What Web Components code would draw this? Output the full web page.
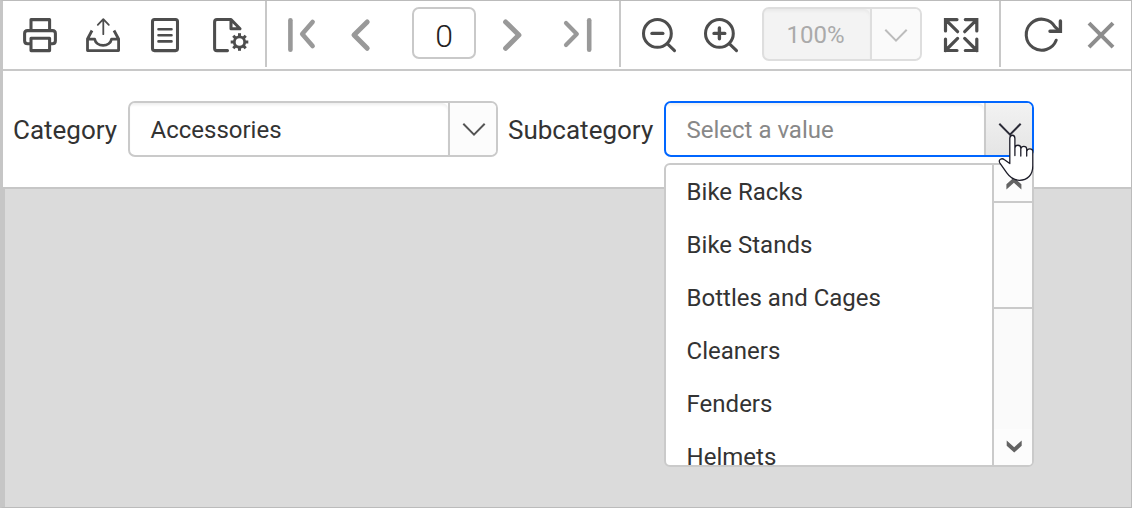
<!DOCTYPE html>
<html lang="en">
<head>
<meta charset="utf-8">
<title>Report Viewer</title>
<style>
html,body{margin:0;height:100%;background:#fff;overflow:hidden}
body{font-family:Roboto,"Liberation Sans",sans-serif;color:#333}
</style>
</head>
<body>
<report-viewer></report-viewer>
<script>
const define = (name, html, setup) => customElements.define(name, class extends HTMLElement {
  constructor() {
    super();
    const t = document.createElement('template');
    t.innerHTML = html;
    this.attachShadow({ mode: 'open' }).appendChild(t.content.cloneNode(true));
  }
  connectedCallback() { if (setup) setup(this, this.shadowRoot); }
});

// Every glyph: [left edge, cell width, markup]; the toolbar row is 68px high.
const teeth = Array.from({ length: 8 }, (_, i) => `<path d="M239.5 36.5V33.2" stroke-width="3" transform="rotate(${i * 45} 239.5 42)"/>`).join('');
const icons = {
  print: [3, 68, '<path d="M31 30V19.6H49.6V30M31 43.8H27.6Q24.6 43.8 24.6 40.8V33.6Q24.6 30.6 27.6 30.6H52.4Q55.4 30.6 55.4 33.6V40.8Q55.4 43.8 52.4 43.8H50M31 38.2H49.6V50.6H31Z"/>'],
  export: [71, 63, '<path stroke-linecap="butt" stroke-width="2.8" d="M92 30.5L87.5 39V50.6H118.6V39L114 30.5M87.5 39.2H94.7C95.5 43 99 45.4 103.1 45.4C107.3 45.4 110.7 43 111.5 39.2H118.6"/><path stroke-width="1.8" d="M103.3 34.2V19.3M97.8 24.8L103.3 19.2L108.8 24.8"/>'],
  doc: [134, 62, '<rect x="152.5" y="19.5" width="25" height="31.1" rx="2"/><path stroke-width="2.6" d="M158.5 29.2H171.5M158.5 35.2H171.5M158.5 41.4H171.5"/>'],
  setup: [196, 69, '<path d="M227.5 50.6H217Q214.6 50.6 214.6 48.2V21.9Q214.6 19.5 217 19.5H231L240 28.8H231V19.5"/><circle cx="239.5" cy="42" r="5.2" stroke-width="2.8"/><g stroke-linecap="butt">' + teeth + '</g>'],
  first: [267, 63, '<g stroke="#999" stroke-width="4.6"><path d="M290.4 20.3V49.8"/><path d="M312.6 22L302.2 34L312.6 46"/></g>'],
  prev: [330, 82, '<path stroke="#999" stroke-width="5" d="M367.2 22L354 35L367.2 48.3"/>'],
  next: [476, 64, '<path stroke="#999" stroke-width="5" d="M505.6 22L518.9 35L505.6 48.3"/>'],
  last: [540, 79, '<g stroke="#999"><path stroke-width="4.2" d="M566 23L576.8 34L566 45"/><path stroke-width="4.6" d="M589.2 20.3V49.8"/></g>'],
  zoomout: [621, 69, '<circle cx="657.4" cy="33.4" r="13.9"/><path d="M667.5 43.8L674.5 50.6"/><path stroke-width="3.4" d="M652 33.4H662.8"/>'],
  zoomin: [690, 72, '<circle cx="719.4" cy="33.4" r="13.9"/><path d="M729.5 43.8L736.5 50.6"/><path stroke-width="3.4" d="M714 33.4H724.8M719.4 28V38.8"/>'],
  full: [922, 77, '<path stroke-linejoin="miter" stroke-width="3.2" d="M957 19.6H945.5V31M945.5 19.6L957.6 31.7M965.3 19.6H976.8V31M976.8 19.6L964.7 31.7M957 50.5H945.5V39M945.5 50.5L957.6 38.4M965.3 50.5H976.8V39M976.8 50.5L964.7 38.4"/>'],
  refresh: [1001, 79, '<path d="M1056.2 40.2A15.5 15.5 0 1 1 1055.3 27.2L1059.5 31"/><path stroke-width="3.4" stroke-linejoin="miter" d="M1060.4 21V31.2H1050"/>'],
  close: [1080, 51, '<path stroke="#8d8d8d" stroke-width="4" stroke-linecap="butt" d="M1089 23.1L1113 47.1M1113 23.1L1089 47.1"/>']
};

define('tool-button', `<style>
:host{display:block;flex:none;height:68px}
svg{display:block;fill:none;stroke:#4d4d4d;stroke-width:3.05;stroke-linecap:round;stroke-linejoin:round}
</style><div></div>`, (el, root) => {
  const [x, w, art] = icons[el.getAttribute('icon')];
  root.querySelector('div').innerHTML = `<svg width="${w}" height="68" viewBox="${x} 1 ${w} 68">${art}</svg>`;
});

define('tool-separator', `<style>:host{display:block;flex:none;width:2px;height:66px;background:#c8c8c8}</style>`);

define('page-input', `<style>
:host{display:block;flex:none;box-sizing:border-box;width:64px;height:52px;margin-top:6px;border:2px solid #c9c9c9;border-radius:7px;font-size:32px;line-height:54px;text-align:center;font-weight:300;color:#222}
</style><slot></slot>`);

define('combo-box', `<style>
:host{display:flex;flex:none;box-sizing:border-box;width:370px;height:56px;border:2px solid #cacaca;border-radius:7px;overflow:hidden;background:#fff;--arrow:#555;--side:#fcfcfc;--line:#cacaca}
.value{flex:1;padding-left:20.5px;font-size:24px;line-height:55px;box-shadow:inset 0 3px 3px -1px #eee;border-radius:0 6px 0 0;white-space:nowrap}
.side{box-sizing:border-box;width:48px;border-left:2px solid var(--line);background:var(--side)}
svg{display:block;fill:none;stroke:var(--arrow);stroke-width:2}
:host([placeholder]) .value{color:#888}
:host([active]){border-color:#0066ff;--arrow:#2c2c38;--side:linear-gradient(#f2f2f2,#e5e5e5)}
:host([disabled]){width:160px;height:54px;margin-top:6px;border-color:#dedede;background:#f3f3f3;--arrow:#bcbcbc;--side:#fafafa;--line:#dedede}
:host([disabled]) .value{color:#aaa;line-height:53px;padding-left:22.5px;box-shadow:inset 0 3px 3px -1px #e8e8e8}
:host([disabled]) .side{width:50px}
</style><div class="value"><slot></slot></div><div class="side"><svg width="46" height="52" viewBox="0 0 46 52"><path d="M13.3 20.8L24 31.6L34.7 20.8"/></svg></div>`);

define('param-label', `<style>:host{display:block;flex:none;font-size:26px;line-height:58px;white-space:nowrap}</style><slot></slot>`);

define('list-item', `<style>:host{display:block;height:53px;line-height:55px;font-size:24px;padding-left:20.6px;white-space:nowrap}</style><slot></slot>`);

define('scroll-bar', `<style>
:host{display:flex;flex-direction:column;flex:none;width:38px;border-left:2px solid #cacaca;background:#fafafa}
.btn{height:36px;background:#fcfcfc}
.thumb{height:104px;border:solid #cacaca;border-width:2px 0;background:#fcfcfc}
.track{flex:1}
svg{display:block;fill:#636363}
</style><div class="btn"><svg width="38" height="36"><path d="M12.4 24.5V19.3L19.9 12.6L27.4 19.3V24.5L19.9 17.8Z"/></svg></div><div class="thumb"></div><div class="track"></div><div class="btn"><svg width="38" height="36"><path d="M12.7 11.6V16.8L20.2 23.6L27.7 16.8V11.6L20.2 18.2Z"/></svg></div>`);

define('drop-list', `<style>
:host{display:flex;box-sizing:border-box;width:370px;height:304px;border:2px solid #cacaca;border-radius:6px;background:#fff;overflow:hidden}
.items{flex:1;overflow:hidden}
</style><div class="items"><slot></slot></div><scroll-bar></scroll-bar>`);

define('hand-cursor', `<style>:host{display:block}svg{display:block}</style>
<svg width="36" height="49" viewBox="998 133 36 49"><path fill="#fff" stroke="#1c1c28" stroke-width="1.3" stroke-linejoin="round" d="M1009.8 163.5V138.4C1009.8 134.2 1014.9 134.2 1014.9 138.4V155.5V148C1015.2 144.3 1020.6 144.3 1020.8 148V156V149C1021.3 145.4 1026.5 145.4 1026.7 149V156V151.3C1027.3 147.8 1032.6 148.1 1032.8 151.3V166C1032.8 175 1027.3 180.3 1019.5 180.3C1013.2 180.3 1010 177.4 1006.8 172.9L999.9 163.1C997.8 159.2 1002 157.8 1004.5 159.7Z"/></svg>`);

define('report-viewer', `<style>
:host{display:flex;flex-direction:column;box-sizing:border-box;width:1132px;height:508px;border:1px solid #bbb;border-left:3px solid #c6c6c6;background:#fff}
.bar{display:flex;flex:none;height:68px;border-bottom:2px solid #c8c8c8}
.params{display:flex;flex:none;height:86px;padding:30px 0 0 10px;border-bottom:2px solid #c6c6c6}
.params param-label:first-child{width:115px}
.second{width:156px;padding-left:10px}
.field{position:relative}
drop-list{position:absolute;top:62px;left:0;z-index:1}
hand-cursor{position:absolute;top:32px;left:334px;z-index:2}
.canvas{flex:1;border-left:2px solid #c6c6c6;background:#dbdbdb}
</style>
<div class="bar">
<tool-button icon="print"></tool-button><tool-button icon="export"></tool-button><tool-button icon="doc"></tool-button><tool-button icon="setup"></tool-button>
<tool-separator></tool-separator>
<tool-button icon="first"></tool-button><tool-button icon="prev"></tool-button><page-input>0</page-input><tool-button icon="next"></tool-button><tool-button icon="last"></tool-button>
<tool-separator></tool-separator>
<tool-button icon="zoomout"></tool-button><tool-button icon="zoomin"></tool-button><combo-box disabled>100%</combo-box><tool-button icon="full"></tool-button>
<tool-separator></tool-separator>
<tool-button icon="refresh"></tool-button><tool-button icon="close"></tool-button>
</div>
<div class="params">
<param-label>Category</param-label><combo-box>Accessories</combo-box>
<param-label class="second">Subcategory</param-label>
<div class="field"><combo-box active placeholder>Select a value</combo-box>
<drop-list><list-item>Bike Racks</list-item><list-item>Bike Stands</list-item><list-item>Bottles and Cages</list-item><list-item>Cleaners</list-item><list-item>Fenders</list-item><list-item>Helmets</list-item></drop-list>
<hand-cursor></hand-cursor></div>
</div>
<div class="canvas"></div>`);
</script>
</body>
</html>
